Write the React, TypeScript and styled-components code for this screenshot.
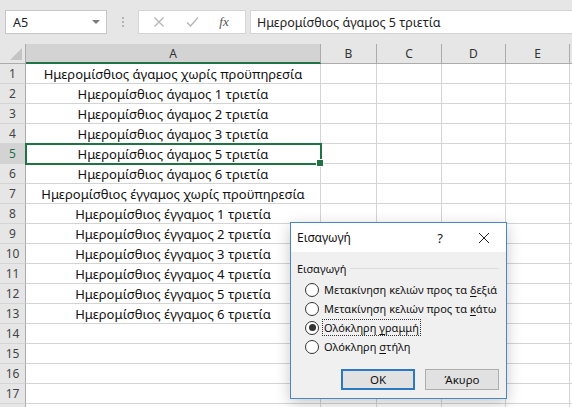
import styled, { createGlobalStyle } from "styled-components";

const GlobalStyle = createGlobalStyle`
  html, body {
    margin: 0;
    padding: 0;
    background: #ffffff;
    overflow: hidden;
  }
`;

const Page = styled.div`
  position: relative;
  width: 572px;
  height: 407px;
  overflow: hidden;
  background: #ffffff;
  font-family: "Noto Sans", "Open Sans", sans-serif;
`;

const Toolbar = styled.div`
  height: 44px;
  box-sizing: border-box;
  background: #e6e6e6;
  display: flex;
  align-items: flex-start;
  padding: 10px 0 0 5px;
`;

const NameBox = styled.div`
  width: 102px;
  height: 24px;
  box-sizing: border-box;
  background: #fff;
  border: 1px solid #c6c6c6;
  display: flex;
  align-items: center;
  justify-content: space-between;
  padding: 0 6px 0 7px;
  font-size: 12.5px;
  color: #222;
`;

const Caret = styled.span`
  width: 0;
  height: 0;
  border-left: 4px solid transparent;
  border-right: 4px solid transparent;
  border-top: 4px solid #7a7a7a;
`;

const Dots = styled.div`
  width: 31px;
  height: 24px;
  display: flex;
  flex-direction: column;
  align-items: center;
  justify-content: center;
  gap: 2px;

  span {
    width: 2px;
    height: 2px;
    background: #b5b5b5;
  }
`;

const IconBox = styled.div`
  width: 108px;
  height: 24px;
  box-sizing: border-box;
  background: #fff;
  border: 1px solid #d4d4d4;
  display: flex;
  align-items: center;
  justify-content: space-around;
  padding: 0 6px 0 4px;
`;

const Fx = styled.span`
  font-family: "Liberation Serif", serif;
  font-style: italic;
  font-size: 13px;
  color: #555;
`;

const FormulaInput = styled.div`
  flex: 1;
  margin-left: 4px;
  height: 24px;
  box-sizing: border-box;
  background: #fff;
  border: 1px solid #d4d4d4;
  border-right: none;
  display: flex;
  align-items: center;
  padding-left: 6px;
  font-size: 12.5px;
  color: #222;
`;

const Sheet = styled.div`
  display: flex;
  flex-direction: column;
`;

const Row = styled.div`
  display: flex;
  height: 20px;
`;

const HeadCell = styled.div<{ $w: number; $active?: boolean }>`
  width: ${({ $w }) => $w}px;
  flex: none;
  box-sizing: border-box;
  height: 20px;
  background: ${({ $active }) => ($active ? "#d3d3d3" : "#e6e6e6")};
  border-right: 1px solid #ababab;
  border-bottom: ${({ $active }) => ($active ? "2px solid #217346" : "1px solid #ababab")};
  display: flex;
  align-items: center;
  justify-content: center;
  font-size: 12px;
  color: #333;
`;

const Corner = styled.div`
  position: relative;
  width: 26px;
  flex: none;
  height: 20px;
  box-sizing: border-box;
  background: #e6e6e6;
  border-right: 1px solid #ababab;
  border-bottom: 1px solid #ababab;

  &::after {
    content: "";
    position: absolute;
    right: 3px;
    bottom: 3px;
    width: 0;
    height: 0;
    border-left: 12px solid transparent;
    border-bottom: 12px solid #c4c4c4;
  }
`;

const RowHead = styled.div<{ $active?: boolean }>`
  width: 26px;
  flex: none;
  box-sizing: border-box;
  height: 20px;
  background: ${({ $active }) => ($active ? "#d3d3d3" : "#e6e6e6")};
  border-right: 1px solid #ababab;
  border-bottom: 1px solid #d4d4d4;
  display: flex;
  align-items: center;
  justify-content: center;
  font-size: 12px;
  color: ${({ $active }) => ($active ? "#217346" : "#444")};
`;

const Cell = styled.div<{ $w: number; $selected?: boolean }>`
  position: relative;
  width: ${({ $w }) => $w}px;
  flex: none;
  box-sizing: border-box;
  height: 20px;
  border-right: 1px solid #d4d4d4;
  border-bottom: 1px solid #d4d4d4;
  display: flex;
  align-items: center;
  justify-content: center;
  font-size: 13px;
  color: #111;
  white-space: nowrap;
  ${({ $selected }) =>
    $selected &&
    `
    outline: 2px solid #217346;
    outline-offset: -1px;
    z-index: 1;
    &::after {
      content: "";
      position: absolute;
      right: -4px;
      bottom: -4px;
      width: 6px;
      height: 6px;
      background: #217346;
      border: 1px solid #fff;
    }
  `}
`;

const Dialog = styled.div`
  position: absolute;
  left: 290px;
  top: 222px;
  width: 217px;
  height: 177px;
  box-sizing: border-box;
  border: 1px solid #4a87c0;
  background: #f0f0f0;
  box-shadow: 0 4px 14px rgba(0, 0, 0, 0.22);
  display: flex;
  flex-direction: column;
  font-size: 11px;
  color: #111;
`;

const TitleBar = styled.div`
  height: 29px;
  background: #fff;
  display: flex;
  align-items: center;
  padding-left: 6px;
  font-size: 12px;
`;

const Title = styled.span`
  flex: 1;
`;

const TitleButton = styled.span`
  width: 44px;
  display: flex;
  align-items: center;
  justify-content: center;
  font-size: 13px;
  color: #222;
`;

const DialogBody = styled.div`
  flex: 1;
  display: flex;
  flex-direction: column;
  padding: 8px 7px 8px 6px;
`;

const GroupLabel = styled.div`
  display: flex;
  align-items: center;
  gap: 4px;
  height: 16px;

  &::after {
    content: "";
    flex: 1;
    height: 1px;
    background: #dcdcdc;
  }
`;

const RadioList = styled.div`
  display: flex;
  flex-direction: column;
  padding: 4px 0 0 8px;
`;

const RadioRow = styled.div`
  height: 19px;
  display: flex;
  align-items: center;
  gap: 4px;
  white-space: nowrap;
`;

const RadioDot = styled.span<{ $checked?: boolean }>`
  width: 14px;
  height: 14px;
  flex: none;
  box-sizing: border-box;
  border-radius: 50%;
  border: 1px solid #333;
  background: #fff;
  display: flex;
  align-items: center;
  justify-content: center;

  &::after {
    content: "";
    width: 7px;
    height: 7px;
    border-radius: 50%;
    background: ${({ $checked }) => ($checked ? "#333" : "transparent")};
  }
`;

const RadioText = styled.span<{ $focus?: boolean }>`
  padding: 0 1px;
  outline: ${({ $focus }) => ($focus ? "1px dotted #333" : "none")};
  line-height: 15px;

  u {
    text-underline-offset: 2px;
  }
`;

const Buttons = styled.div`
  margin-top: auto;
  display: flex;
  justify-content: flex-end;
  gap: 10px;
`;

const Button = styled.div<{ $primary?: boolean }>`
  width: 74px;
  height: 21px;
  box-sizing: border-box;
  background: #e1e1e1;
  border: ${({ $primary }) => ($primary ? "2px solid #2b78c5" : "1px solid #adadad")};
  display: flex;
  align-items: center;
  justify-content: center;
  font-size: 11.5px;
`;

const cols = [
  { name: "A", w: 295 },
  { name: "B", w: 56 },
  { name: "C", w: 65 },
  { name: "D", w: 64 },
  { name: "E", w: 64 },
  { name: "", w: 60 },
];

const values = [
  "Ημερομίσθιος άγαμος χωρίς προϋπηρεσία",
  "Ημερομίσθιος άγαμος 1 τριετία",
  "Ημερομίσθιος άγαμος 2 τριετία",
  "Ημερομίσθιος άγαμος 3 τριετία",
  "Ημερομίσθιος άγαμος 5 τριετία",
  "Ημερομίσθιος άγαμος 6 τριετία",
  "Ημερομίσθιος έγγαμος χωρίς προϋπηρεσία",
  "Ημερομίσθιος έγγαμος 1 τριετία",
  "Ημερομίσθιος έγγαμος 2 τριετία",
  "Ημερομίσθιος έγγαμος 3 τριετία",
  "Ημερομίσθιος έγγαμος 4 τριετία",
  "Ημερομίσθιος έγγαμος 5 τριετία",
  "Ημερομίσθιος έγγαμος 6 τριετία",
];

// row 18 is only partly visible, so it gets no number
const rows = Array.from({ length: 18 }, (_, i) => i + 1);

export default function App() {
  return (
    <>
      <GlobalStyle />
      <Page>
        <Toolbar>
          <NameBox>
            A5
            <Caret />
          </NameBox>
          <Dots>
            <span />
            <span />
            <span />
          </Dots>
          <IconBox>
            <svg width="12" height="12" viewBox="0 0 12 12">
              <path d="M1.5 1.5 L10.5 10.5 M10.5 1.5 L1.5 10.5" stroke="#b3b3b3" strokeWidth="1.2" fill="none" />
            </svg>
            <svg width="13" height="12" viewBox="0 0 13 12">
              <path d="M1 6.5 L4.5 10 L12 1.5" stroke="#b3b3b3" strokeWidth="1.2" fill="none" />
            </svg>
            <Fx>fx</Fx>
          </IconBox>
          <FormulaInput>Ημερομίσθιος άγαμος 5 τριετία</FormulaInput>
        </Toolbar>
        <Sheet>
          <Row>
            <Corner />
            {cols.map((c) => (
              <HeadCell key={c.name} $w={c.w} $active={c.name === "A"}>
                {c.name}
              </HeadCell>
            ))}
          </Row>
          {rows.map((r) => (
            <Row key={r}>
              <RowHead $active={r === 5}>{r < 18 ? r : ""}</RowHead>
              {cols.map((c, ci) => (
                <Cell key={c.name} $w={c.w} $selected={r === 5 && ci === 0}>
                  {ci === 0 ? values[r - 1] ?? "" : ""}
                </Cell>
              ))}
            </Row>
          ))}
        </Sheet>

        <Dialog>
          <TitleBar>
            <Title>Εισαγωγή</Title>
            <TitleButton>?</TitleButton>
            <TitleButton>
              <svg width="12" height="12" viewBox="0 0 12 12">
                <path d="M1 1 L11 11 M11 1 L1 11" stroke="#222" strokeWidth="1" fill="none" />
              </svg>
            </TitleButton>
          </TitleBar>
          <DialogBody>
            <GroupLabel>Εισαγωγή</GroupLabel>
            <RadioList>
              <RadioRow>
                <RadioDot />
                <RadioText>
                  Μετακίνηση κελιών προς τα <u>δ</u>εξιά
                </RadioText>
              </RadioRow>
              <RadioRow>
                <RadioDot />
                <RadioText>
                  Μετακίνηση κελιών προς τα <u>κ</u>άτω
                </RadioText>
              </RadioRow>
              <RadioRow>
                <RadioDot $checked />
                <RadioText $focus>
                  Ολόκληρη <u>γ</u>ραμμή
                </RadioText>
              </RadioRow>
              <RadioRow>
                <RadioDot />
                <RadioText>
                  Ολόκληρη <u>σ</u>τήλη
                </RadioText>
              </RadioRow>
            </RadioList>
            <Buttons>
              <Button $primary>OK</Button>
              <Button>Άκυρο</Button>
            </Buttons>
          </DialogBody>
        </Dialog>
      </Page>
    </>
  );
}
